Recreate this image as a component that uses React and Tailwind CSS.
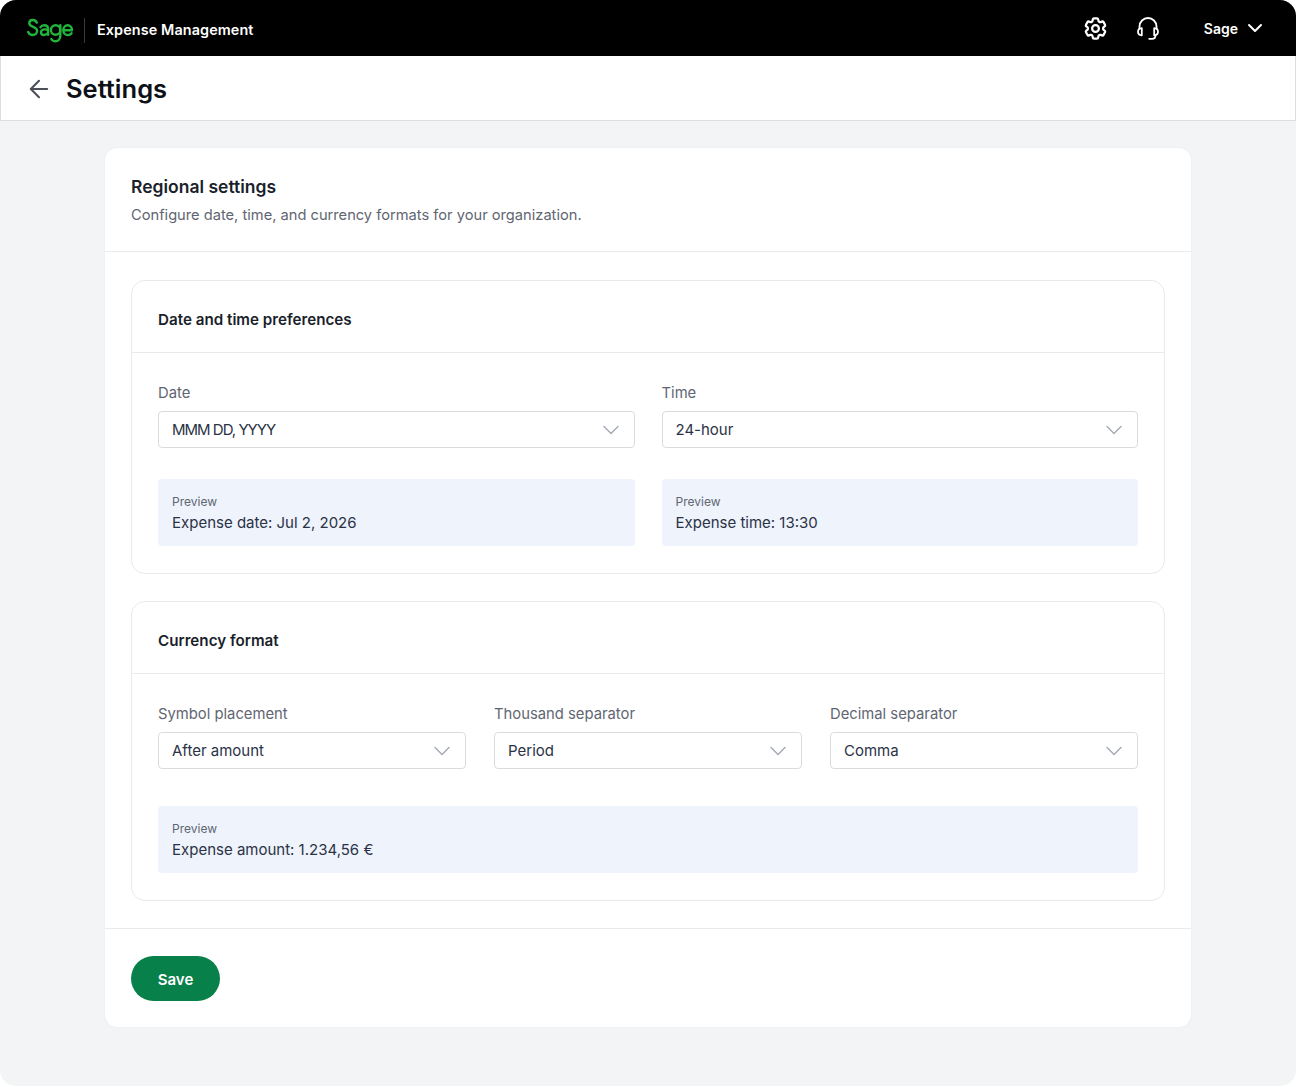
import React from 'react'
import { ArrowLeft, ChevronDown } from 'lucide-react'
import { HiOutlineCog6Tooth } from 'react-icons/hi2'

function SageLogo() {
  return (
    <svg className="mt-[5px]" width="46" height="26" viewBox="0 0 46 26" fill="none" stroke="#22b33c" strokeWidth="2.400" strokeLinecap="round" strokeLinejoin="round">
      <path d="M9.800 4.600C9 3 7.600 2 5.800 2 3.700 2 2.300 3.300 2.300 5.200c0 4.400 7.800 3 7.800 7.600 0 2.500-2 4.200-4.300 4.200-2.200 0-3.800-1.100-4.600-3" />
      <path d="M13.500 9.200c.8-1.300 2.100-2 3.700-2 2.400 0 3.900 1.500 3.900 3.800v5.800M21.100 12.300c-1-.6-2.200-.9-3.400-.9-2.200 0-3.700 1-3.700 2.800 0 1.700 1.400 2.800 3.200 2.800 1.600 0 3-.7 3.900-2.300" />
      <circle cx="28.600" cy="12" r="4.700" />
      <path d="M33.300 7.300v10.500c0 3.300-2 5.400-4.900 5.400-1.800 0-3.300-.8-4.100-2.200" />
      <path d="M36.300 12.300H45c0-3-1.900-5-4.300-5-2.500 0-4.400 2.200-4.400 4.900s1.900 4.900 4.500 4.900c1.600 0 2.900-.7 3.700-1.800" />
    </svg>
  )
}

function HeadsetIcon() {
  return (
    <svg className="ml-[27px]" width="24" height="24" viewBox="0 0 24 24" fill="none" stroke="white" strokeWidth="1.800" strokeLinecap="round" strokeLinejoin="round">
      <path d="M3.500 12.500V10.500a8.500 8.500 0 0 1 17 0v2" />
      <path d="M5.800 12.200c-2.200.2-3.800 1.700-3.800 3.600s1.600 3.400 3.800 3.600zM18.200 12.200c2.200.2 3.800 1.700 3.800 3.600s-1.600 3.400-3.800 3.600z" />
      <path d="M19.500 19.500c0 2-1.300 3.300-3.500 3.300h-2.800" />
    </svg>
  )
}

function Select({ value, tight }) {
  return (
    <div className="flex items-center justify-between h-[37px] px-[13px] bg-white border border-[#d9dcdf] rounded-[4px]">
      <span className={tight ? 'pt-[2px] text-[15px] tracking-[-1px] text-[#2b3245]' : 'pt-[2px] text-[15px] text-[#2b3245]'}>{value}</span>
      <ChevronDown className="w-[28px] h-[28px] -mr-[4px] text-[#a3a8b4]" strokeWidth={1.2} />
    </div>
  )
}

function Field({ label, value, tight }) {
  return (
    <div>
      <div className="text-[14.800px] leading-[20px] text-[#5f6672] mb-[8px]">{label}</div>
      <Select value={value} tight={tight} />
    </div>
  )
}

function Preview({ text }) {
  return (
    <div className="h-[67px] px-[14px] pt-[14px] bg-[#eef3fc] rounded-[4px]">
      <div className="text-[12px] leading-[17px] text-[#5f6672]">Preview</div>
      <div className="mt-[2px] text-[15px] leading-[22px] text-[#2b3245]">{text}</div>
    </div>
  )
}

function Section({ title, children }) {
  return (
    <section className="border border-[#e8eaed] rounded-[14px]">
      <h3 className="h-[72px] pt-[7px] flex items-center px-[26px] text-[15.200px] font-semibold text-[#1a1f2b] border-b border-[#e8eaed]">{title}</h3>
      {children}
    </section>
  )
}

export default function App() {
  return (
    <div className="w-[1296px] h-[1087px] bg-white font-['Inter','Liberation_Sans',sans-serif]">
      <div className="h-[1086px] bg-[#f2f4f5] rounded-[16px] overflow-hidden">
        <header className="h-[56px] bg-black flex items-center pl-[27px] pr-[29px] text-white">
          <SageLogo />
          <div className="w-px h-[25px] mt-[4px] bg-[#3a3a3a] ml-[11px] mr-[12px]" />
          <span className="mt-[3px] text-[14.400px] font-semibold tracking-[0.1px]">Expense Management</span>
          <div className="ml-auto flex items-center">
            <HiOutlineCog6Tooth className="w-[27px] h-[27px]" strokeWidth={2} />
            <HeadsetIcon />
            <span className="ml-[44px] text-[14px] font-semibold">Sage</span>
            <ChevronDown className="w-[24px] h-[24px] ml-[5px]" strokeWidth={2} />
          </div>
        </header>
        <div className="h-[65px] pt-[2px] bg-white border border-t-0 border-[#dcdfe2] flex items-center pl-[24px]">
          <ArrowLeft className="w-[28px] h-[28px] text-[#4a4f58]" strokeWidth={1.75} />
          <h1 className="ml-[13px] text-[25.500px] font-semibold text-[#0d1017]">Settings</h1>
        </div>
        <main className="mt-[27px] mx-[105px] h-[879px] bg-white rounded-[12px] shadow-[0_0_2px_rgba(0,0,0,0.06)]">
          <div className="h-[104px] px-[26px] pt-[27px] border-b border-[#e8eaed]">
            <h2 className="text-[17.500px] leading-[24px] font-semibold text-[#1a1f2b]">Regional settings</h2>
            <p className="mt-[5px] text-[14.670px] leading-[22px] text-[#5f6672]">Configure date, time, and currency formats for your organization.</p>
          </div>
          <div className="h-[677px] px-[26px] pt-[28px] flex flex-col gap-[27px] border-b border-[#e8eaed]">
            <Section title="Date and time preferences">
              <div className="grid grid-cols-2 gap-x-[27px] px-[26px] pt-[30px] pb-[27px]">
                <Field label="Date" value="MMM DD, YYYY" tight />
                <Field label="Time" value="24-hour" />
                <div className="mt-[31px]"><Preview text="Expense date: Jul 2, 2026" /></div>
                <div className="mt-[31px]"><Preview text="Expense time: 13:30" /></div>
              </div>
            </Section>
            <Section title="Currency format">
              <div className="px-[26px] pt-[30px] pb-[27px]">
                <div className="grid grid-cols-3 gap-x-[28px]">
                  <Field label="Symbol placement" value="After amount" />
                  <Field label="Thousand separator" value="Period" />
                  <Field label="Decimal separator" value="Comma" />
                </div>
                <div className="mt-[37px]"><Preview text="Expense amount: 1.234,56 €" /></div>
              </div>
            </Section>
          </div>
          <div className="pl-[26px] pt-[27px]">
            <button className="w-[89px] h-[45px] pt-[3px] rounded-full bg-[#08804a] text-white text-[15px] font-semibold">Save</button>
          </div>
        </main>
      </div>
    </div>
  )
}
